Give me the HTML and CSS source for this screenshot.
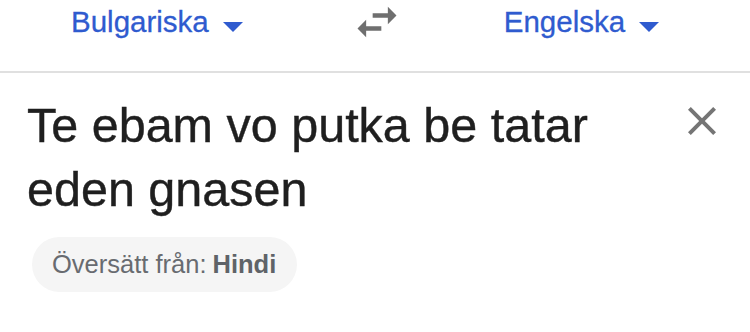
FILE: index.html
```html
<!DOCTYPE html>
<html lang="sv">
<head>
  <meta charset="UTF-8" />
  <meta name="viewport" content="width=device-width, initial-scale=1.0"/>
  <title>Översätt</title>
  <link rel="stylesheet" href="styles.css">
</head>
<body>
  <div class="header">
    <div class="lang">
      <span>Bulgariska</span>
      <span class="caret"></span>
    </div>
    <svg class="swap" viewBox="0 0 24 24" width="52" height="52">
      <path d="M6.99 11L3 15l3.99 4v-3H14v-2H6.99v-3zM21 9l-3.99-4v3H10v2h7.01v3L21 9z"/>
    </svg>
    <div class="lang">
      <span>Engelska</span>
      <span class="caret"></span>
    </div>
  </div>

  <div class="source">
    <div class="text">Te ebam vo putka be tatar eden gnasen</div>
    <svg class="clear" viewBox="0 0 24 24" width="48" height="48">
      <path d="M19 6.41L17.59 5 12 10.59 6.41 5 5 6.41 10.59 12 5 17.59 6.41 19 12 13.41 17.59 19 19 17.59 13.41 12z"/>
    </svg>
  </div>

  <div class="detected">
    <span class="chip">Översätt från:<b>Hindi</b></span>
  </div>
</body>
</html>
```

FILE: styles.css
```css
* {
  box-sizing: border-box;
  margin: 0;
  padding: 0;
}

body {
  background: #fff;
  color: #202124;
  font-family: 'Liberation Sans', Arial, sans-serif;
}

.header {
  display: flex;
  align-items: center;
  height: 73px;
  padding: 0 0 27px 71px;
  border-bottom: 2px solid #e0e0e0;
}

.lang {
  display: flex;
  align-items: center;
  gap: 14px;
  color: #2f5bcf;
  font-size: 29.5px;
  line-height: 46px;
  -webkit-text-stroke: 0.3px #2f5bcf;
}

.caret {
  width: 0;
  height: 0;
  margin-top: 9px;
  border-left: 10px solid transparent;
  border-right: 10px solid transparent;
  border-top: 10px solid #2f5bcf;
}

.swap {
  fill: #6f6f6f;
  margin: 0 101px 0 108px;
}

.source {
  display: flex;
  justify-content: space-between;
  align-items: flex-start;
  padding: 20px 24px 0 27px;
}

.text {
  max-width: 620px;
  font-size: 48.5px;
  line-height: 64px;
  color: #1f1f1f;
  -webkit-text-stroke: 0.4px #1f1f1f;
}

.clear {
  fill: #757575;
  margin-top: 4px;
}

.detected {
  padding: 16px 0 0 32px;
}

.chip {
  display: inline-block;
  background: #f5f5f5;
  color: #686b70;
  font-size: 25.5px;
  line-height: 29px;
  padding: 13px 21px 13px 20px;
  border-radius: 28px;
}

.chip b {
  margin-left: 6px;
  color: #5f6368;
}
```
